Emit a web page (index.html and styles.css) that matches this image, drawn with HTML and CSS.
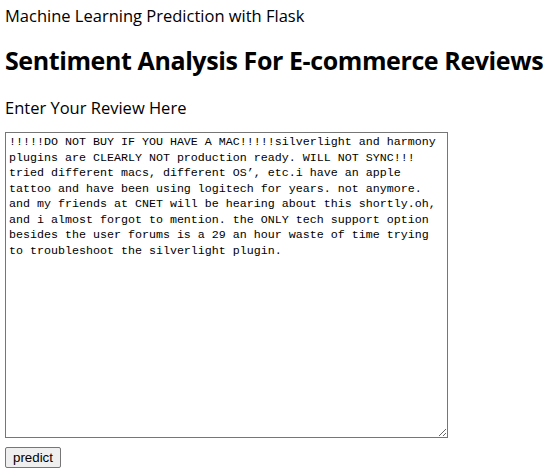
FILE: index.html
```html
<!DOCTYPE html>
<html>
<head>
<meta charset="utf-8">
<title>Sentiment Analysis</title>
<link rel="stylesheet" href="styles.css">
</head>
<body>
<p class="subtitle">Machine Learning Prediction with Flask</p>
<h1 class="title">Sentiment Analysis For E-commerce Reviews</h1>
<form class="form">
<label class="label" for="review">Enter Your Review Here</label>
<textarea id="review" class="review">!!!!!DO NOT BUY IF YOU HAVE A MAC!!!!!silverlight and harmony plugins are CLEARLY NOT production ready. WILL NOT SYNC!!! tried different macs, different OS’, etc.i have an apple tattoo and have been using logitech for years. not anymore. and my friends at CNET will be hearing about this shortly.oh, and i almost forgot to mention. the ONLY tech support option besides the user forums is a 29 an hour waste of time trying to troubleshoot the silverlight plugin.</textarea>
<div class="actions"><button type="button" class="btn">predict</button></div>
</form>
</body>
</html>
```
FILE: styles.css
```css
html, body {
  margin: 0;
  padding: 0;
  background: #fff;
}
body {
  padding: 0 5px;
  font-family: "Open Sans", "Noto Sans", sans-serif;
  color: #000;
}
.subtitle {
  margin: 5px 0 0;
  font-size: 16.5px;
  line-height: 22px;
}
.title {
  margin: 17px 0 0;
  font-size: 25px;
  line-height: 32px;
  font-weight: 700;
  letter-spacing: -0.4px;
  white-space: nowrap;
}
.form {
  display: flex;
  flex-direction: column;
  align-items: flex-start;
  margin-top: 21px;
}
.label {
  font-size: 16.5px;
  line-height: 22px;
}
.review {
  box-sizing: border-box;
  margin: 13px 0 0;
  width: 443px;
  height: 306px;
  padding: 2px 3px;
  border: 1px solid #767676;
  font-family: "Liberation Mono", monospace;
  font-size: 11.67px;
  line-height: 15.5px;
  color: #000;
  resize: both;
}
.actions {
  margin-top: 7px;
}
.btn {
  box-sizing: border-box;
  width: 56px;
  height: 21px;
  padding: 0 6px;
  font-family: "Liberation Sans", Arial, sans-serif;
  font-size: 13.33px;
  color: #000;
  background: #efefef;
  border: 1px solid #767676;
  border-radius: 2px;
}
```
